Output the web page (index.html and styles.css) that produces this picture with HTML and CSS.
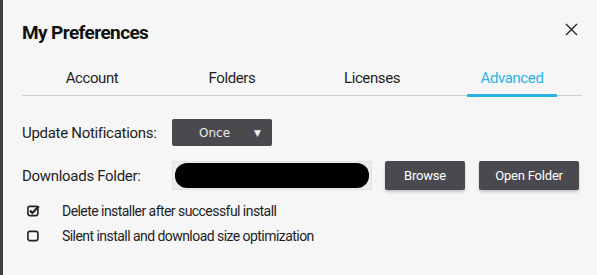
FILE: index.html
```html
<!DOCTYPE html>
<html lang="en">
<head>
    <meta charset="UTF-8">
    <title>My Preferences</title>
    <link rel="stylesheet" href="styles.css">
</head>
<body>
    <div class="dialog">
        <div class="dialog-header">
            <h2>My Preferences</h2>
            <span class="close-btn">
                <svg width="13" height="13" viewBox="0 0 13 13"><path d="M1 1 L12 12 M12 1 L1 12" stroke="#222" stroke-width="1.3" fill="none"/></svg>
            </span>
        </div>
        <div class="tabs">
            <div class="tab">Account</div>
            <div class="tab">Folders</div>
            <div class="tab">Licenses</div>
            <div class="tab active">Advanced</div>
        </div>
        <div class="settings">
            <div class="setting-row">
                <label>Update Notifications:</label>
                <div class="select">
                    <span>Once</span>
                    <span class="caret">&#9660;</span>
                </div>
            </div>
            <div class="setting-row">
                <label>Downloads Folder:</label>
                <div class="path-box"><div class="redacted"></div></div>
                <button class="btn btn-browse">Browse</button>
                <button class="btn btn-open">Open Folder</button>
            </div>
        </div>
        <div class="options">
            <div class="option">
                <svg width="13" height="12" viewBox="0 0 13 12"><rect x="0.9" y="1.4" width="10" height="9.2" rx="2" stroke="#222" stroke-width="1.6" fill="none"/><path d="M3 5.6 L5.4 8 L11.8 1.2" stroke="#222" stroke-width="2.2" fill="none"/></svg>
                <span>Delete installer after successful install</span>
            </div>
            <div class="option">
                <svg width="13" height="12" viewBox="0 0 13 12"><rect x="0.9" y="1.4" width="10" height="9.2" rx="2" stroke="#222" stroke-width="1.6" fill="none"/></svg>
                <span>Silent install and download size optimization</span>
            </div>
        </div>
    </div>
</body>
</html>
```

FILE: styles.css
```css
body {
    margin: 0;
    padding: 0;
    background-color: #f6f6f6;
    font-family: Roboto, sans-serif;
    color: #1e1e1e;
}
.dialog {
    height: 275px;
    box-sizing: border-box;
    border-left: 3px solid #3e3e3e;
    padding: 0 15px 0 19px;
}
.dialog-header {
    display: flex;
    justify-content: space-between;
    align-items: center;
    padding-top: 20px;
}
.dialog-header h2 {
    margin: 0;
    font-size: 19px;
    font-weight: bold;
    color: #111;
    line-height: 26px;
    letter-spacing: -0.6px;
}
.close-btn {
    display: flex;
    margin-right: 4px;
    margin-top: -8px;
}
.tabs {
    display: flex;
    margin-top: 22px;
    border-bottom: 1px solid #cfcfcf;
}
.tab {
    flex: 1;
    text-align: center;
    font-size: 15px;
    line-height: 20px;
    padding-bottom: 7px;
    position: relative;
    color: #1e1e1e;
    letter-spacing: -0.4px;
}
.tab.active {
    color: #2bb3e6;
}
.tab.active::after {
    content: '';
    position: absolute;
    left: 50%;
    bottom: -2px;
    width: 90px;
    margin-left: -45px;
    height: 3px;
    background-color: #2bb3e6;
}
.settings {
    margin-top: 23px;
    display: flex;
    flex-direction: column;
    gap: 15px;
}
.setting-row {
    display: flex;
    align-items: center;
}
.setting-row label {
    width: 150px;
    font-size: 15px;
    letter-spacing: -0.3px;
}
.select {
    width: 100px;
    height: 27px;
    box-sizing: border-box;
    background-color: #4a494e;
    border-radius: 2px;
    color: #eee;
    display: flex;
    align-items: center;
    justify-content: space-between;
    padding: 0 11px 0 27px;
    font-family: 'DejaVu Sans', sans-serif;
    font-size: 12px;
}
.select .caret {
    font-size: 9px;
}
.path-box {
    width: 200px;
    height: 29px;
    box-sizing: border-box;
    background-color: #ececec;
    border: 1px solid #e2e2e2;
    padding: 1px 2px;
}
.redacted {
    height: 25px;
    background-color: #000;
    border-radius: 12px;
}
.btn {
    height: 29px;
    box-sizing: border-box;
    background-color: #4a494f;
    color: #fff;
    border: none;
    border-radius: 2px;
    font-family: Roboto, sans-serif;
    font-size: 13px;
    letter-spacing: -0.2px;
    box-shadow: 0 2px 3px rgba(0, 0, 0, 0.2);
}
.btn-browse {
    width: 80px;
    margin-left: 13px;
}
.btn-open {
    width: 100px;
    margin-left: 14px;
}
.options {
    margin-top: 12px;
    display: flex;
    flex-direction: column;
    gap: 7px;
}
.option {
    display: flex;
    align-items: center;
    font-size: 14px;
    line-height: 18px;
    letter-spacing: -0.55px;
}
.option svg {
    margin-left: 5px;
    margin-right: 22px;
}
```
